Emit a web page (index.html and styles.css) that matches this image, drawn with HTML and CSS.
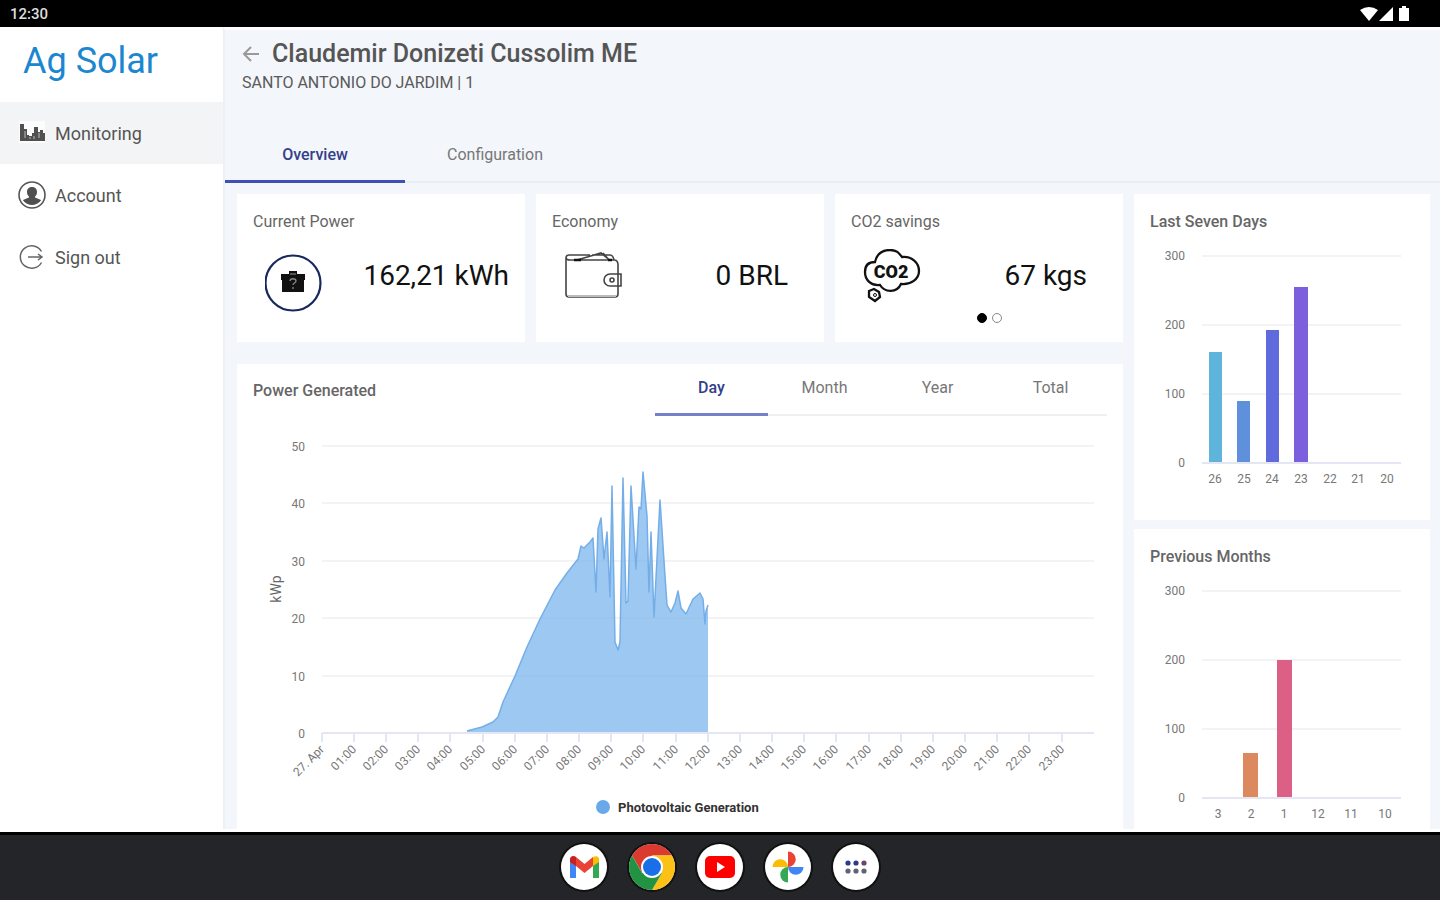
FILE: index.html
```html
<!DOCTYPE html>
<html lang="en">
<head>
<meta charset="utf-8">
<meta name="viewport" content="width=device-width, initial-scale=1">
<title>Ag Solar</title>
<link rel="stylesheet" href="styles.css">
</head>
<body>
<header class="status-bar">
  <span class="clock">12:30</span>
  <svg class="status-icons" width="52" height="18" viewBox="0 0 52 18" aria-hidden="true">
    <path d="M0 5Q9 -1 18 5L9 16Z"/><path d="M33 2V16H19Z"/><path d="M39 3h3V1h4v2h3v13H39Z"/>
  </svg>
</header>

<div class="app">
  <aside class="sidebar">
    <div class="brand">Ag Solar</div>
    <nav class="nav">
      <a class="nav-item nav-item--active" href="#monitoring">
        <svg width="28" height="28" viewBox="0 0 28 28" aria-hidden="true"><rect x="1" y="2" width="26" height="22" fill="#fff" opacity=".7"/><path fill="#505050" d="M2 5h4v5h3v6h2v1h3v-3h2V8h4v5h2v-2h3v3h2v8H2Z"/><path stroke="#bbb" d="M7 12v7M12 18v2M16 17v3M21 14v5"/></svg>
        Monitoring
      </a>
      <a class="nav-item" href="#account">
        <svg width="28" height="28" viewBox="0 0 28 28" aria-hidden="true"><circle cx="14" cy="14" r="13" fill="#fff" stroke="#555" stroke-width="1.6"/><path fill="#505050" d="M14 6c3.400 0 5 2.300 5 5 0 2.200-.8 3.600-2 4.600v1l6 2.400a11 11 0 0 1-18 0l6-2.400v-1c-1.200-1-2-2.400-2-4.600 0-2.700 1.600-5 5-5Z"/><path fill="#505050" d="M5 19h18a11 11 0 0 1-18 0Z"/></svg>
        Account
      </a>
      <a class="nav-item" href="#signout">
        <svg width="28" height="28" viewBox="0 0 28 28" fill="none" stroke="#666" stroke-width="1.500" aria-hidden="true"><path d="M23.500 8.500A11.300 11.300 0 1 0 23.500 19.500M10 14h14M20 11l4 3-4 3"/></svg>
        Sign out
      </a>
    </nav>
  </aside>

  <main class="content">
    <div class="page-head">
      <div class="title-row">
        <button class="back" type="button" aria-label="Back">
          <svg width="18" height="18" viewBox="0 0 18 18" fill="none" stroke="#999" stroke-width="2" aria-hidden="true"><path d="M17 9H2M9 2L2 9l7 7"/></svg>
        </button>
        <h1>Claudemir Donizeti Cussolim ME</h1>
      </div>
      <p class="location">SANTO ANTONIO DO JARDIM | 1</p>
    </div>

    <div class="tabs">
      <button class="tab tab--active" type="button">Overview</button>
      <button class="tab" type="button">Configuration</button>
    </div>

    <div class="dashboard">
      <div class="column">
        <div class="stats">
          <section class="card stat">
            <h2>Current Power</h2>
            <div class="stat-body stat-body--wide">
              <svg width="58" height="64" viewBox="0 0 58 64" aria-hidden="true"><circle cx="28" cy="34" r="27.500" fill="#fff" stroke="#17285f" stroke-width="2.200"/><path fill="#111" d="M16 25h8v-3h8v3h8v6h-1v12H17V31h-1Z"/><path d="M25 32c0-3 6-3 6 0 0 2-3 2-3 4M28 38v2" fill="none" stroke="#888" stroke-width="1.300"/><path d="M25 25h6" stroke="#999"/></svg>
              <strong>162,21 kWh</strong>
            </div>
          </section>
          <section class="card stat">
            <h2>Economy</h2>
            <div class="stat-body">
              <svg width="58" height="64" viewBox="-1 0 58 64" fill="none" stroke="#444" stroke-width="1.600" aria-hidden="true"><path d="M4 6Q1 6 1 9V45Q1 48 4 48H50Q53 48 53 45V37M53 25V16Q53 11 49 11H5Q1 11 1 8M4 6H25M12 11L36 4l6 5M27 6h18q3 0 4 5M38 4l6 7M53 25H45a6 6 0 0 0 0 12h8ZM53 25h3v12h-3"/><circle cx="47" cy="31" r="2"/><path d="M3 47H51" stroke="#bbb" stroke-width="2"/><path d="M9 11h7M43 11h4" stroke="#111" stroke-width="2.500"/></svg>
              <strong>0 BRL</strong>
            </div>
          </section>
          <section class="card stat">
            <h2>CO2 savings</h2>
            <div class="stat-body">
              <svg width="58" height="64" viewBox="0 0 58 64" fill="none" stroke="#111" stroke-width="2.300" aria-hidden="true"><path d="M12 13C14 4 20 1 27 1S36 4 39 8C49 7 56 14 56 22S48 36 38 35C34 44 22 44 17 36C8 37 2 31 2 23 2 17 5 13 12 13Z"/><path d="M6 42l5-2 5 3 1 5-5 4-6-4Z"/><circle cx="12" cy="46" r="1.500" stroke-width="1"/><text class="co2-text" x="28" y="29" text-anchor="middle">CO2</text></svg>
              <strong>67 kgs</strong>
            </div>
            <div class="dots">
              <button class="dot dot--active" type="button" aria-label="First slide"></button>
              <button class="dot" type="button" aria-label="Second slide"></button>
            </div>
          </section>
        </div>

        <section class="card power">
          <div class="power-head">
            <h2>Power Generated</h2>
            <div class="range">
              <button class="range-tab range-tab--active" type="button">Day</button>
              <button class="range-tab" type="button">Month</button>
              <button class="range-tab" type="button">Year</button>
              <button class="range-tab" type="button">Total</button>
            </div>
          </div>
          <svg class="chart" viewBox="-85 -30 886 414" role="img" aria-label="Photovoltaic generation in kWp">
            <path class="grid" d="M0 0H772M0 57H772M0 115H772M0 172H772M0 230H772"/>
            <path fill="#7cb5ec" fill-opacity=".75" d="M145 287V285L160 281 171 276 176 271 181 256 193 230 205 201 218 173 233 144 245 127 256 113 259 100 262 102 268 96 271 92 274 146 276 83 279 72 282 113 285 86 288 151 290 40 293 196 296 204 298 196 301 32 304 157 306 155 309 40 314 123 317 61 319 63 321 26 325 70 327 146 329 86 332 171 338 54 343 130 345 159 349 166 353 157 356 145 359 162 364 168 371 153 378 147 381 153 383 178 384 165 386 159V287Z"/>
            <path fill="none" stroke="#74aee8" stroke-width="1.500" stroke-linejoin="round" d="M145 285L160 281 171 276 176 271 181 256 193 230 205 201 218 173 233 144 245 127 256 113 259 100 262 102 268 96 271 92 274 146 276 83 279 72 282 113 285 86 288 151 290 40 293 196 296 204 298 196 301 32 304 157 306 155 309 40 314 123 317 61 319 63 321 26 325 70 327 146 329 86 332 171 338 54 343 130 345 159 349 166 353 157 356 145 359 162 364 168 371 153 378 147 381 153 383 178 384 165 386 159"/>
            <path class="axis" d="M0 287H772M0 287v9M32 287v9M64 287v9M96 287v9M128 287v9M161 287v9M193 287v9M225 287v9M257 287v9M289 287v9M321 287v9M354 287v9M386 287v9M418 287v9M450 287v9M482 287v9M514 287v9M547 287v9M579 287v9M611 287v9M643 287v9M675 287v9M707 287v9M740 287v9"/>
            <g class="labels" text-anchor="end">
              <text x="-17" y="5">50</text><text x="-17" y="62">40</text><text x="-17" y="120">30</text><text x="-17" y="177">20</text><text x="-17" y="235">10</text><text x="-17" y="292">0</text>
              <text transform="translate(3 304) rotate(-45)">27. Apr</text>
              <text transform="translate(35 304) rotate(-45)">01:00</text>
              <text transform="translate(67 304) rotate(-45)">02:00</text>
              <text transform="translate(99 304) rotate(-45)">03:00</text>
              <text transform="translate(131 304) rotate(-45)">04:00</text>
              <text transform="translate(164 304) rotate(-45)">05:00</text>
              <text transform="translate(196 304) rotate(-45)">06:00</text>
              <text transform="translate(228 304) rotate(-45)">07:00</text>
              <text transform="translate(260 304) rotate(-45)">08:00</text>
              <text transform="translate(292 304) rotate(-45)">09:00</text>
              <text transform="translate(324 304) rotate(-45)">10:00</text>
              <text transform="translate(357 304) rotate(-45)">11:00</text>
              <text transform="translate(389 304) rotate(-45)">12:00</text>
              <text transform="translate(421 304) rotate(-45)">13:00</text>
              <text transform="translate(453 304) rotate(-45)">14:00</text>
              <text transform="translate(485 304) rotate(-45)">15:00</text>
              <text transform="translate(517 304) rotate(-45)">16:00</text>
              <text transform="translate(550 304) rotate(-45)">17:00</text>
              <text transform="translate(582 304) rotate(-45)">18:00</text>
              <text transform="translate(614 304) rotate(-45)">19:00</text>
              <text transform="translate(646 304) rotate(-45)">20:00</text>
              <text transform="translate(678 304) rotate(-45)">21:00</text>
              <text transform="translate(710 304) rotate(-45)">22:00</text>
              <text transform="translate(743 304) rotate(-45)">23:00</text>
            </g>
            <text class="axis-title" text-anchor="middle" transform="translate(-41 143) rotate(-90)">kWp</text>
            <circle cx="281" cy="361" r="7" fill="#6aa9e9"/>
            <text class="legend" x="296" y="366">Photovoltaic Generation</text>
          </svg>
        </section>
      </div>

      <div class="column column--side">
        <section class="card mini">
          <h2>Last Seven Days</h2>
          <svg class="chart" viewBox="-68 -20 296 284" role="img" aria-label="Last seven days">
            <path class="grid" d="M0 0H199M0 69H199M0 138H199"/>
            <path class="axis" d="M0 207H199"/>
            <rect x="7" y="96" width="13" height="110" fill="#5fb4dc"/>
            <rect x="35" y="145" width="13" height="61" fill="#5f90dc"/>
            <rect x="64" y="74" width="13" height="132" fill="#5f6adc"/>
            <rect x="92" y="31" width="14" height="175" fill="#7b5fdc"/>
            <g class="labels" text-anchor="end"><text x="-17" y="4">300</text><text x="-17" y="73">200</text><text x="-17" y="142">100</text><text x="-17" y="211">0</text></g>
            <g class="labels" text-anchor="middle"><text x="13" y="227">26</text><text x="42" y="227">25</text><text x="70" y="227">24</text><text x="99" y="227">23</text><text x="128" y="227">22</text><text x="156" y="227">21</text><text x="185" y="227">20</text></g>
          </svg>
        </section>
        <section class="card mini">
          <h2>Previous Months</h2>
          <svg class="chart" viewBox="-68 -20 296 284" role="img" aria-label="Previous months">
            <path class="grid" d="M0 0H199M0 69H199M0 138H199"/>
            <path class="axis" d="M0 207H199"/>
            <rect x="41" y="162" width="15" height="44" fill="#dc895f"/>
            <rect x="75" y="69" width="15" height="137" fill="#dc5f85"/>
            <g class="labels" text-anchor="end"><text x="-17" y="4">300</text><text x="-17" y="73">200</text><text x="-17" y="142">100</text><text x="-17" y="211">0</text></g>
            <g class="labels" text-anchor="middle"><text x="16" y="227">3</text><text x="49" y="227">2</text><text x="82" y="227">1</text><text x="116" y="227">12</text><text x="149" y="227">11</text><text x="183" y="227">10</text></g>
          </svg>
        </section>
      </div>
    </div>
  </main>
</div>

<footer class="dock">
  <button class="dock-app" type="button" aria-label="Gmail">
    <svg viewBox="0 0 46 46" aria-hidden="true"><path fill="#4285f4" d="M9 14l6 5v15H9Z"/><path fill="#34a853" d="M38 14l-6 5v15h6Z"/><path fill="#ea4335" d="M9 16c0-4 3-5 6-3l8.500 7 8.500-7v9l-8.500 7-8.500-7-6-4Z"/><path fill="#fbbc04" d="M32 13c4-2 6 0 6 3v2l-6 4Z"/><path fill="#c5221f" d="M9 16c0-3 3-5 6-3v9l-6-4Z"/></svg>
  </button>
  <button class="dock-app" type="button" aria-label="Chrome">
    <svg viewBox="0 0 46 46" aria-hidden="true"><path fill="#db3a2f" d="M3.100 11.500A23 23 0 0 1 42.900 11.500H23L13 28.500Z"/><path fill="#fbc116" d="M42.900 11.500A23 23 0 0 1 23 46L33 28.700 23 11.500Z"/><path fill="#229342" d="M3.100 11.500A23 23 0 0 0 23 46L33 28.700 13 28.700Z"/><circle cx="23" cy="23" r="11" fill="#fff"/><circle cx="23" cy="23" r="9" fill="#1a6ee8"/></svg>
  </button>
  <button class="dock-app" type="button" aria-label="YouTube">
    <svg viewBox="0 0 46 46" aria-hidden="true"><rect x="8" y="12" width="30" height="22" rx="5" fill="#f00"/><path fill="#fff" d="M20 18v10l8-5Z"/></svg>
  </button>
  <button class="dock-app" type="button" aria-label="Photos">
    <svg viewBox="0 0 46 46" aria-hidden="true"><path fill="#ea4335" d="M23 7.500a7.700 7.700 0 0 1 0 15.500Z"/><path fill="#4285f4" d="M38.500 23a7.700 7.700 0 0 1-15.500 0Z"/><path fill="#34a853" d="M23 38.500a7.700 7.700 0 0 1 0-15.500Z"/><path fill="#fbbc04" d="M7.500 23a7.700 7.700 0 0 1 15.500 0Z"/></svg>
  </button>
  <button class="dock-app" type="button" aria-label="All apps">
    <svg viewBox="0 0 46 46" aria-hidden="true"><g fill="#2c3c86"><circle cx="15" cy="19" r="2.600"/><circle cx="23" cy="19" r="2.600"/></g><circle cx="31" cy="19" r="2.600" fill="#6c4668"/><g fill="#5e6475"><circle cx="15" cy="27" r="2.600"/><circle cx="23" cy="27" r="2.600"/><circle cx="31" cy="27" r="2.600"/></g></svg>
  </button>
</footer>
</body>
</html>
```
FILE: styles.css
```css
* { box-sizing: border-box; }

body {
  margin: 0;
  height: 100vh;
  display: flex;
  flex-direction: column;
  overflow: hidden;
  background: #fff;
  color: #555;
  font-family: Roboto, "Liberation Sans", sans-serif;
  font-size: 16px;
}

h1, h2, p { margin: 0; }

button {
  padding: 0;
  border: 0;
  background: none;
  color: inherit;
  font: inherit;
  cursor: pointer;
}

.status-bar {
  flex: none;
  height: 27px;
  padding: 0 28px 0 10px;
  display: flex;
  align-items: center;
  justify-content: space-between;
  background: #000;
  color: #ddd;
}

.clock { font-size: 15px; font-weight: 500; }
.status-icons { fill: #fff; }

.app {
  flex: 1;
  min-height: 0;
  display: flex;
  border-bottom: 3px solid #fff;
}

.sidebar { flex: none; width: 223px; background: #fff; }

.brand {
  height: 75px;
  padding: 12px 23px 0;
  color: #1c87d0;
  font-size: 36px;
  line-height: 44px;
}

.nav-item {
  height: 62px;
  padding: 0 18px;
  display: flex;
  align-items: center;
  gap: 9px;
  color: #555;
  font-size: 18px;
  text-decoration: none;
}

.nav-item--active { background: #f3f4f5; }

.content {
  flex: 1;
  min-width: 0;
  overflow: hidden;
  border-top: 3px solid #fff;
  border-left: 2px solid #edf0f4;
  background: #f3f6fa;
}

.page-head { height: 95px; padding: 8px 17px 0; }
.title-row { display: flex; align-items: center; gap: 12px; }
.back { display: flex; }

h1 {
  color: #555;
  font-size: 25px;
  font-weight: 500;
  line-height: 32px;
}

.location { font-size: 16px; line-height: 26px; color: #5a5a5a; }

.tabs { display: flex; border-bottom: 2px solid #eaedf3; }

.tab {
  width: 180px;
  height: 58px;
  margin-bottom: -2px;
  padding-top: 4px;
  border-bottom: 3px solid transparent;
  color: #777;
}

.tab--active { border-color: #3f51b5; color: #34408a; font-weight: 500; }

.dashboard {
  padding: 11px 10px 0 12px;
  display: grid;
  grid-template-columns: minmax(0, 1fr) 296px;
  gap: 11px;
  align-items: start;
}

.column { display: grid; gap: 22px; }
.column--side { gap: 9px; }
.card { background: #fff; }

.stats {
  display: grid;
  grid-template-columns: repeat(3, minmax(0, 1fr));
  gap: 11px;
}

h2 {
  color: #666;
  font-size: 16px;
  font-weight: 500;
  line-height: 24px;
}

.stat {
  min-height: 148px;
  padding: 16px 36px 0 28px;
}

.stat:has(.stat-body--wide) { padding-right: 16px; }
.stat h2 { margin-left: -12px; font-weight: 400; }

.stat-body {
  padding-top: 15px;
  display: flex;
  justify-content: space-between;
}

.stat-body svg { flex: none; }

.stat-body strong {
  padding-top: 11px;
  color: #111;
  font-size: 28px;
  font-weight: 400;
  line-height: 32px;
}

.co2-text {
  fill: #111;
  stroke: none;
  font-size: 18px;
  font-weight: 900;
}

.dots {
  padding-left: 28px;
  display: flex;
  justify-content: center;
  gap: 5px;
}

.dot {
  width: 10px;
  height: 10px;
  border: 1px solid #888;
  border-radius: 50%;
}

.dot--active { border-color: #000; background: #000; }

.power-head {
  padding: 0 16px;
  display: flex;
  justify-content: space-between;
}

.power-head h2 { padding-top: 15px; }
.range { display: flex; border-bottom: 2px solid #f0f0f2; }

.range-tab {
  width: 113px;
  height: 52px;
  margin-bottom: -2px;
  padding-bottom: 3px;
  border-bottom: 3px solid transparent;
  color: #777;
}

.range-tab--active { border-color: #7580c8; color: #34408a; font-weight: 500; }

.chart { display: block; width: 100%; height: auto; }
.grid { fill: none; stroke: #f3f3f5; stroke-width: 2; }
.axis { fill: none; stroke: #e4e7f3; stroke-width: 2; }
.labels { fill: #777; font-size: 12px; }
.axis-title { fill: #666; font-size: 14px; }
.legend { fill: #333; font-size: 13px; font-weight: 700; }

.mini h2 { padding: 16px 16px 0; }
.mini .chart { margin-top: 2px; }

.dock {
  flex: none;
  height: 68px;
  padding-bottom: 2px;
  display: flex;
  align-items: center;
  justify-content: center;
  gap: 22px;
  border-top: 3px solid #000;
  background: #242529;
}

.dock-app {
  width: 46px;
  height: 46px;
  border-radius: 50%;
  background: #fff;
  box-shadow: 0 0 0 2px #111;
}

.dock-app svg { display: block; width: 46px; height: 46px; }
```
